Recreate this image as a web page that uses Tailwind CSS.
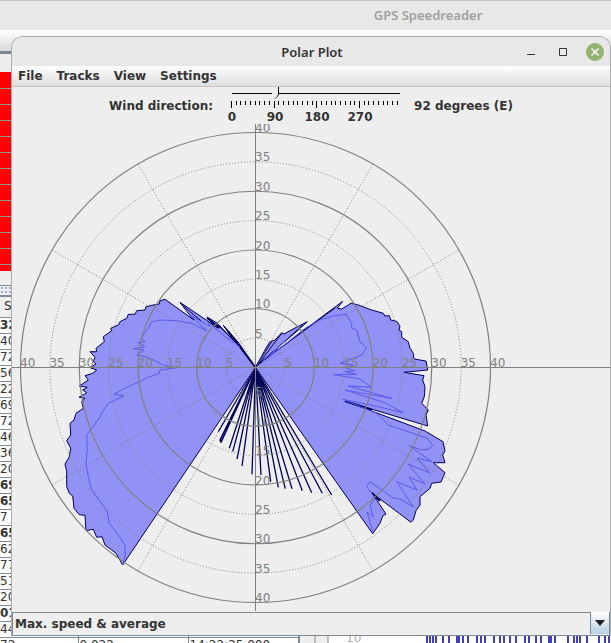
<!DOCTYPE html>
<html lang="en">

<head>
  <meta charset="UTF-8">
  <meta name="viewport" content="width=device-width, initial-scale=1.0">
  <title>Polar Plot</title>
  <script src="https://cdn.jsdelivr.net/npm/@tailwindcss/browser@4"></script>
</head>

<body class="relative h-screen overflow-hidden bg-[#eeeeee] font-['DejaVu_Sans',sans-serif] text-[#333333]">
  <!-- Main window, behind -->
  <div class="flex h-full flex-col overflow-hidden">
    <header class="h-[30px] shrink-0 border-t border-[#c4c4c4] bg-[#e8e8e8] pl-[245px] text-center font-['Noto_Sans',sans-serif] text-[13px] leading-[29px] font-semibold text-[#a0a0a0]">GPS Speedreader</header>
    <div class="h-[21px] shrink-0 bg-linear-to-b from-white to-[#dadada]"></div>
    <div class="h-[3px] shrink-0 bg-[#7a8a99]"></div>
    <div class="h-[18px] shrink-0"></div>
    <div class="h-[199px] shrink-0 bg-[#ff0000] pt-px">
      <div class="h-4 border-b border-[#a09080]"></div>
      <div class="h-4 border-b border-[#a09080]"></div>
      <div class="h-4 border-b border-[#a09080]"></div>
      <div class="h-4 border-b border-[#a09080]"></div>
      <div class="h-4 border-b border-[#a09080]"></div>
      <div class="h-4 border-b border-[#a09080]"></div>
      <div class="h-4 border-b border-[#a09080]"></div>
      <div class="h-4 border-b border-[#a09080]"></div>
      <div class="h-4 border-b border-[#a09080]"></div>
      <div class="h-4 border-b border-[#a09080]"></div>
      <div class="h-4 border-b border-[#a09080]"></div>
      <div class="h-4 border-b border-[#a09080]"></div>
    </div>
    <div class="h-[15px] shrink-0 border-b border-[#7a8a99]"></div>
    <div class="h-[11px] shrink-0 border-b-2 border-[#7a8a99] bg-[radial-gradient(#a0b0c8_1px,transparent_1px)] bg-size-[4px_4px]"></div>
    <div class="flex min-h-0 flex-1">
      <table class="w-[300px] shrink-0 table-fixed self-start border-collapse border-r-2 border-[#7a8a99] bg-white text-[12px] leading-[15px] whitespace-nowrap">
        <thead>
          <tr class="h-5 border-b border-[#7a8a99] bg-[#eeeeee] text-left">
            <th class="w-[78px] pl-1 font-normal">S</th>
            <th class="w-[110px]"></th>
            <th></th>
          </tr>
        </thead>
        <tbody id="rows"></tbody>
      </table>
      <svg class="h-full min-w-0 flex-1" aria-hidden="true">
        <rect x="28" y="0" width="100%" height="100%" fill="#fff" />
        <path d="M15 0V400M28 0V400" stroke="#888" fill="none" />
        <text x="46" y="345" font-size="12" fill="#b0b0b0">10</text>
        <path d="M127 338v12M130 338v12M133 338v12M136 338v12M143 338v12M149 338v12M157 338v12M159 338v12M163 338v12M168 338v12M177 338v12M181 338v12M185 338v12M194 338v12M200 338v12M204 338v12M210 338v12M216 338v12M225 338v12M229 338v12M236 338v12M241 338v12M249 338v12M251 338v12M255 338v12M268 338v12M274 338v12M277 338v12M280 338v12M287 338v12M299 338v12M305 338v12M309 338v12" stroke="#0000aa" stroke-width="1.5" />
      </svg>
    </div>
  </div>

  <!-- Polar plot window -->
  <main class="absolute top-9 right-0 bottom-[7px] left-[11px] flex flex-col overflow-hidden rounded-t-xl border border-b-0 border-[#a8acb0] bg-[#eeeeee]">
    <div class="flex h-[29px] shrink-0 items-center bg-[#e8e8e8] pr-[6px]">
      <h1 class="flex-1 pl-[90px] text-center font-['Noto_Sans',sans-serif] text-[13px] leading-[28px] font-semibold">Polar Plot</h1>
      <div class="flex items-center gap-[14px]">
        <button class="size-[18px]" aria-label="Minimize">
          <svg viewBox="0 0 18 18"><path d="M5 11.5h8" stroke="#333" /></svg>
        </button>
        <button class="size-[18px]" aria-label="Maximize">
          <svg viewBox="0 0 18 18"><path d="M5.500 5.500h7v7h-7z" stroke="#333" fill="none" /></svg>
        </button>
        <button class="size-[18px]" aria-label="Close">
          <svg viewBox="0 0 18 18"><circle cx="9" cy="9" r="9" fill="#92b372" /><path d="M5.500 5.500l7 7M12.500 5.500l-7 7" stroke="#fff" stroke-width="1.500" /></svg>
        </button>
      </div>
    </div>

    <nav class="flex h-[21px] shrink-0 items-start gap-[14px] border-b border-[#c4c4c4] bg-linear-to-b from-white to-[#dedede] pl-[6px] text-[12px] leading-[20px] font-bold">
      <button>File</button>
      <button>Tracks</button>
      <button>View</button>
      <button>Settings</button>
    </nav>

    <div class="flex h-[37px] shrink-0 justify-center text-[12px] leading-[38px] font-bold">
      <label for="wind">Wind direction:</label>
      <div class="relative ml-[14px] w-[178px]">
        <svg class="h-[37px] w-full" viewBox="0 0 178 37">
          <path d="M5 6.500h168" stroke="#000" />
          <path id="ticks" stroke="#000" />
          <g font-size="12" text-anchor="middle" fill="#333">
            <text x="5" y="34">0</text>
            <text x="48" y="34">90</text>
            <text x="90" y="34">180</text>
            <text x="133" y="34">270</text>
          </g>
        </svg>
        <input id="wind" type="range" min="0" max="359" value="92" class="absolute top-0 left-px h-[12px] w-full appearance-none bg-transparent [&::-webkit-slider-thumb]:h-[12px] [&::-webkit-slider-thumb]:w-[7px] [&::-webkit-slider-thumb]:appearance-none [&::-webkit-slider-thumb]:rounded-br-md [&::-webkit-slider-thumb]:border-r [&::-webkit-slider-thumb]:border-black [&::-webkit-slider-thumb]:bg-[#eeeeee]">
      </div>
      <output for="wind" class="ml-[9px]">92 degrees (E)</output>
    </div>

    <svg class="min-h-0 w-full flex-1" viewBox="12 124 598 487" role="img" aria-label="Speed by direction">
      <!-- Maximum speed -->
      <g fill="#9191f6" stroke="#000058" stroke-linejoin="round">
        <path d="M255.500 367.500L238 342 224 326 233 340 236 343 217 323 207 317 213 325 218 328 180 302.300 188 313 194 320 165 299.300 160 300.700 159.300 304 151.700 305.300 146 306.700 145 310 136.700 310.700 135 314.300 128.300 314.300 126.700 318.300 120 321.700 118.300 325 110.700 328.300 111.700 330.700 103.300 336.700 104.300 341.700 96 348.300 96.700 351.700 90 351.700 95 357.300 93.300 361 96 364 90 367.700 96.700 370 92.700 373.300 85 375.700 88.300 380 79.300 386 87.300 387.300 82.700 390 86.700 392.700 79 397.300 85 398.300 81.700 401.700 83.300 408.300 76 413.300 74 420 70 423.300 70.700 435 66.700 440.700 70.700 448.300 69.300 456.700 65 464 66.700 471.700 66.700 486.700 69.300 493.300 72.700 496 74 508.300 79.300 514.700 85 515.300 86 530.700 93.300 529.300 96.700 537.300 102 536.700 105 545 111.700 550 116 553.300 122.700 565z" />
        <path d="M255.500 367.500L266 348 270 341.700 275 340 281.700 332.700 284 334 293 329 307.300 321.700 296 332 260 363 342.700 301.300 337.300 308.300 341.700 309 351 303.300 358.300 305 371.700 310 383.300 313.300 385 316 389.300 315.700 390.700 320 396.700 321.300 400 326 399 330 401.700 331.700 401.700 337.300 408.300 341.700 410 348.300 413.300 353.300 414 359 426 361 427.700 370 404 372.300 424 375.700 422.700 380 425 386.700 424.300 396.700 421.700 403.300 428.300 410 426 415 427.700 426 345 401 425 431 443 441.700 445 451 442.700 455 445 462.700 433.300 462.700 445 472.700 441 482 431.700 483.300 430 488.300 420 496.700 420 505 416 510.700 413.300 520 411 522.300 371.700 492.700 386 514 382.700 516 380 523.300 372.700 533.700z" />
        <path d="M255.500 367.500L218.300 431.700M255.500 367.500L229.300 448.300M255.500 367.500L232.700 451.700M255.500 367.500L237 459M255.500 367.500L242 466M255.500 367.500L252 474.300M255.500 367.500L261 475M255.500 367.500L270.700 481.700M255.500 367.500L278.300 487.300M255.500 367.500L285.300 488.700M255.500 367.500L292 488.700M255.500 367.500L302.300 490.700M255.500 367.500L311.700 492.700M255.500 367.500L322.300 493.300M255.500 367.500L331.700 495" stroke-width="1.300" />
        <path d="M255.500 367.500L220 440 221 442.300z" stroke-width="1.500" />
        <path d="M345 401L372 410M372 493L380 501M255.500 367.500L228 331M207 318L220 328" stroke-width="2" />
        <path d="M218 325L234 341M223 325L238 344M180 303L201 321M256 366L272 341M257 366L282 333M258 365L303 325M260 363L335 308" />
      </g>
      <!-- Average speed -->
      <g fill="none" stroke="#5a5af0">
        <path d="M240 347L225 336.700 208 322 210 326.700 190 315 207 331 191.700 323.300 176.700 320.700 160 320 151.700 321.700 149.300 326.700 143.300 335 141.700 338.300 145 341.700 138.300 342.700 145 346.700 133.300 348.700 144 350 136.700 355 145 356.700 153.300 360 163.300 365 175.300 368 160 370 159.300 373.300 148.300 377.300 125 388.300 114 394 124 396 108.300 403.300 101.700 413.300 99.300 418.300 91.700 428.300 86.700 435 87.300 450 86 463.300 88.300 476.700 90.700 486.700 93.300 491.700 107.300 511.700 109.300 523.300 120.700 538.300 125.300 546 125 556.700 122.700 565" />
        <path d="M262 362L290 336 268 358 305 328.300 320 320 333.300 316 346 314 351.700 323.300 351.700 328.300 356.700 330 360 341.700 366.700 347.700 361.700 355 353.300 358.300 340 363.300 353.300 365 346.700 368.300 355 370.700 345 371.700 356.700 374.300 334 374.700 360 379 371.700 387.300 348.300 386 391.700 398.300 345 390 385 402.700 403.300 412.700 375 406 342.700 399.300 376.700 413.300 388.300 425 426.700 438 432.700 445 429 449 421.700 450 409.300 445.700 431.700 461.700 417 458 430 473 408 464 425 484 409 477 417 490 396.700 481.700 413 506.700 400 499 393 498 382 490 370 481.700 366.700 486.700 375 498 370 505 373 517 367 512 372.700 531" />
      </g>
      <!-- Grid -->
      <g fill="none" stroke="#808080">
        <path d="M12 367.500H610M255.500 124V611" />
        <g stroke-width="1.200">
          <circle cx="255.500" cy="367.500" r="58.750" />
          <circle cx="255.500" cy="367.500" r="117.500" />
          <circle cx="255.500" cy="367.500" r="176.250" />
          <circle cx="255.500" cy="367.500" r="235" />
        </g>
        <g stroke-dasharray="1 2">
          <circle cx="255.500" cy="367.500" r="29.375" />
          <circle cx="255.500" cy="367.500" r="88.125" />
          <circle cx="255.500" cy="367.500" r="146.875" />
          <circle cx="255.500" cy="367.500" r="205.625" />
          <path d="M255.500 367.500L373 164M255.500 367.500L459 250M255.500 367.500L459 485M255.500 367.500L373 571M255.500 367.500L138 571M255.500 367.500L52 485M255.500 367.500L52 250M255.500 367.500L138 164" />
        </g>
      </g>
      <g id="labels" font-size="12" fill="#808080"></g>
    </svg>

    <div class="relative h-[25px] shrink-0">
      <select aria-label="Plot type" class="h-full w-full appearance-none border border-b-2 border-[#7a8a99] bg-[#eeeeee] pl-[2px] text-[12px] font-bold">
        <option>Max. speed &amp; average</option>
      </select>
      <span class="pointer-events-none absolute top-px right-px bottom-[2px] flex w-[19px] items-center justify-center border-l border-[#7a8a99] bg-linear-to-b from-white to-[#b8cfe5]">
        <svg class="h-[6px] w-[10px]" viewBox="0 0 10 6"><path d="M0 0h10L5 6z" fill="#222" /></svg>
      </span>
    </div>
  </main>

  <script>
    const values = ['32', '40', '72', '56', '22', '69', '72', '46', '36', '20', '69', '65', '7', '65', '62', '77', '51', '20', '01', '44', '72'];
    const boldRows = [0, 10, 11, 13, 18];
    document.getElementById('rows').innerHTML = values.map((value, i) => `
      <tr class="h-4 border-b border-[#7a8a99]">
        <td class="border-r border-[#7a8a99] p-0 ${boldRows.includes(i) ? 'font-bold' : ''}">${value}</td>
        <td class="border-r border-[#7a8a99] p-0 pl-px">${i === 20 ? '0.022' : ''}</td>
        <td class="p-0 pl-px">${i === 20 ? '14:22:25.000' : ''}</td>
      </tr>`).join('');

    // one tick every 10 degrees, a longer one every 90
    let ticks = '';
    for (let deg = 0; deg < 360; deg += 10) {
      ticks += `M${Math.round(deg * 0.474) + 4.5} 14v${deg % 90 === 0 ? 7 : 4}`;
    }
    document.getElementById('ticks').setAttribute('d', ticks);

    let labels = '';
    for (let speed = 5; speed <= 40; speed += 5) {
      const r = speed * 5.875;
      labels += `<text x="${255 + r}" y="367">${speed}</text><text x="${255 - r}" y="367">${speed}</text>`;
      labels += `<text x="255" y="${367 - r}">${speed}</text><text x="255" y="${367 + r}">${speed}</text>`;
    }
    document.getElementById('labels').innerHTML = labels;
  </script>
</body>

</html>
